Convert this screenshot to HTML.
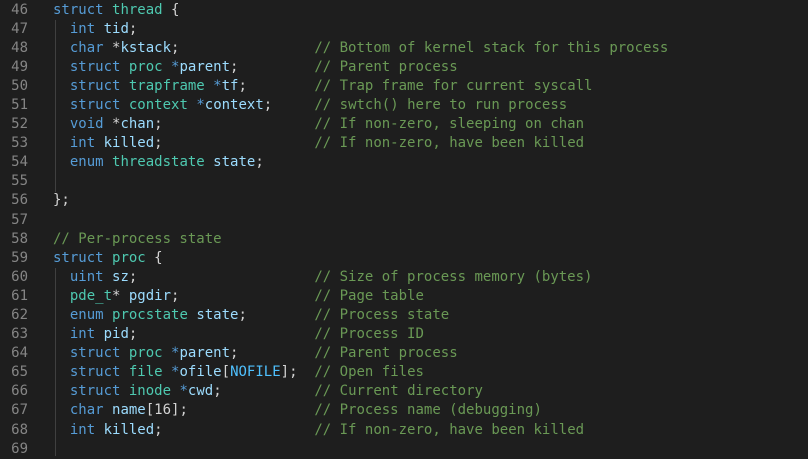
<!DOCTYPE html>
<html><head><meta charset="utf-8"><style>
html,body{margin:0;padding:0;background:#1e1e1e;width:808px;height:455px;overflow:hidden}
.ed{position:absolute;left:0;top:0.5px;font-family:"DejaVu Sans Mono","Liberation Mono",monospace;font-size:14px;line-height:19.1px;white-space:pre;color:#d4d4d4}
.ln{position:absolute;left:0;top:0;width:28px;text-align:right;color:#858585}
.code{position:absolute;left:53px;top:0}
.g{position:absolute;left:55px;width:1px;background:#404040}
.k{color:#569cd6}.t{color:#4ec9b0}.v{color:#9cdcfe}.c{color:#6a9955}.n{color:#4fc1ff}
</style></head><body>
<div class="g" style="top:20px;height:172px"></div>
<div class="g" style="top:268px;height:188px"></div>
<div class="ed"><div class="ln">46
47
48
49
50
51
52
53
54
55
56
57
58
59
60
61
62
63
64
65
66
67
68
69</div><div class="code"><span class="k">struct</span> <span class="t">thread</span> {
  <span class="k">int</span> <span class="v">tid</span>;
  <span class="k">char</span> *<span class="v">kstack</span>;                <span class="c">// Bottom of kernel stack for this process</span>
  <span class="k">struct</span> <span class="t">proc</span> <span class="k">*</span><span class="v">parent</span>;         <span class="c">// Parent process</span>
  <span class="k">struct</span> <span class="t">trapframe</span> <span class="k">*</span><span class="v">tf</span>;        <span class="c">// Trap frame for current syscall</span>
  <span class="k">struct</span> <span class="t">context</span> <span class="k">*</span><span class="v">context</span>;     <span class="c">// swtch() here to run process</span>
  <span class="k">void</span> *<span class="v">chan</span>;                  <span class="c">// If non-zero, sleeping on chan</span>
  <span class="k">int</span> <span class="v">killed</span>;                  <span class="c">// If non-zero, have been killed</span>
  <span class="k">enum</span> <span class="t">threadstate</span> <span class="v">state</span>;

};

<span class="c">// Per-process state</span>
<span class="k">struct</span> <span class="t">proc</span> {
  <span class="k">uint</span> <span class="v">sz</span>;                     <span class="c">// Size of process memory (bytes)</span>
  <span class="t">pde_t</span>* <span class="v">pgdir</span>;                <span class="c">// Page table</span>
  <span class="k">enum</span> <span class="t">procstate</span> <span class="v">state</span>;        <span class="c">// Process state</span>
  <span class="k">int</span> <span class="v">pid</span>;                     <span class="c">// Process ID</span>
  <span class="k">struct</span> <span class="t">proc</span> <span class="k">*</span><span class="v">parent</span>;         <span class="c">// Parent process</span>
  <span class="k">struct</span> <span class="t">file</span> <span class="k">*</span><span class="v">ofile</span>[<span class="n">NOFILE</span>];  <span class="c">// Open files</span>
  <span class="k">struct</span> <span class="t">inode</span> <span class="k">*</span><span class="v">cwd</span>;           <span class="c">// Current directory</span>
  <span class="k">char</span> <span class="v">name</span>[16];               <span class="c">// Process name (debugging)</span>
  <span class="k">int</span> <span class="v">killed</span>;                  <span class="c">// If non-zero, have been killed</span>
</div></div>
</body></html>
